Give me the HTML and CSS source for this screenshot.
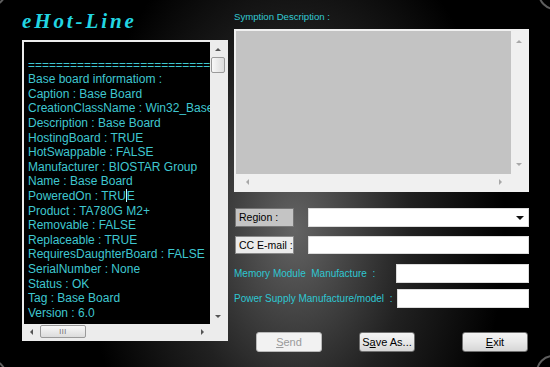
FILE: index.html
```html
<!DOCTYPE html>
<html lang="en">
<head>
  <meta charset="UTF-8">
  <meta name="viewport" content="width=device-width, initial-scale=1.0">
  <title>eHot-Line</title>
  <link rel="stylesheet" href="styles.css">
</head>
<body>

  <div class="window">
    <div class="ring ring-tl"></div>
    <div class="ring ring-tr"></div>
    <div class="ring ring-bl"></div>
    <div class="ring ring-br"></div>

    <div class="left">
      <h1 class="title">eHot-Line</h1>

      <div class="log">
        <div class="log-text">
          <div class="line">&nbsp;</div>
          <div class="line">========================================</div>
          <div class="line">Base board informatiom :</div>
          <div class="line">Caption : Base Board</div>
          <div class="line">CreationClassName : Win32_BaseBoard</div>
          <div class="line">Description : Base Board</div>
          <div class="line">HostingBoard : TRUE</div>
          <div class="line">HotSwappable : FALSE</div>
          <div class="line">Manufacturer : BIOSTAR Group</div>
          <div class="line">Name : Base Board</div>
          <div class="line">PoweredOn : TRU<span class="caret"></span>E</div>
          <div class="line">Product : TA780G M2+</div>
          <div class="line">Removable : FALSE</div>
          <div class="line">Replaceable : TRUE</div>
          <div class="line">RequiresDaughterBoard : FALSE</div>
          <div class="line">SerialNumber : None</div>
          <div class="line">Status : OK</div>
          <div class="line">Tag : Base Board</div>
          <div class="line">Version : 6.0</div>
        </div>
        <div class="vscroll">
          <div class="arrow-box"><span class="arr arr-up"></span></div>
          <div class="vthumb"></div>
          <div class="spacer"></div>
          <div class="arrow-box"><span class="arr arr-down"></span></div>
        </div>
        <div class="hscroll">
          <div class="arrow-box"><span class="arr arr-left"></span></div>
          <div class="hthumb">III</div>
          <div class="spacer"></div>
          <div class="arrow-box"><span class="arr arr-right"></span></div>
        </div>
        <div class="scroll-corner"></div>
      </div>
    </div>

    <div class="right">
      <div class="caption">Symption Description :</div>

      <div class="memo">
        <div class="memo-area"></div>
        <div class="vscroll light">
          <div class="arrow-box"><span class="arr arr-up"></span></div>
          <div class="spacer"></div>
          <div class="arrow-box"><span class="arr arr-down"></span></div>
        </div>
        <div class="hscroll light">
          <div class="arrow-box"><span class="arr arr-left"></span></div>
          <div class="spacer"></div>
          <div class="arrow-box"><span class="arr arr-right"></span></div>
        </div>
        <div class="scroll-corner"></div>
      </div>

      <div class="row row-region">
        <div class="tag tag-dark">Region :</div>
        <div class="field select"><span class="drop"></span></div>
      </div>

      <div class="row row-cc">
        <div class="tag">CC E-mail :</div>
        <div class="field"></div>
      </div>

      <div class="row row-memory">
        <div class="caption big">Memory Module&nbsp; Manufacture&nbsp; :</div>
        <div class="field field-memory"></div>
      </div>

      <div class="row row-power">
        <div class="caption big">Power Supply Manufacture/model&nbsp; :</div>
        <div class="field field-power"></div>
      </div>

      <div class="buttons">
        <button class="btn btn-send" disabled><u>S</u>end</button>
        <button class="btn btn-save">S<u>a</u>ve As...</button>
        <button class="btn btn-exit"><u>E</u>xit</button>
      </div>
    </div>
  </div>

</body>
</html>
```

FILE: styles.css
```css
body {
  margin: 0;
  font-family: "Liberation Sans", Arial, sans-serif;
}

.window {
  position: relative;
  width: 550px;
  height: 367px;
  overflow: hidden;
  display: flex;
  padding-left: 22px;
  box-sizing: border-box;
  background:
    radial-gradient(ellipse 210px 320px at 295px 230px, rgba(105,105,105,0.95), rgba(55,55,55,0.6) 55%, rgba(0,0,0,0) 100%),
    #000;
}

/* grey arcs in the corners */
.ring {
  position: absolute;
  width: 30px;
  height: 30px;
  border: 2px solid #5e5e5e;
  border-radius: 50%;
}

.ring-tl { left: -27px; top: -27px; }
.ring-tr { right: -22px; top: -24px; }
.ring-bl { left: -27px; bottom: -26px; }
.ring-br { right: -20px; bottom: -22px; }

.left {
  width: 206px;
}

.title {
  margin: 0;
  height: 31px;
  padding-top: 9px;
  font-family: "Liberation Serif", "Times New Roman", serif;
  font-style: italic;
  font-weight: bold;
  font-size: 21px;
  line-height: 24px;
  letter-spacing: 2.9px;
  color: #22d6e2;
}

.log {
  width: 206px;
  height: 301px;
  box-sizing: border-box;
  border: 2px solid #ececec;
  display: grid;
  grid-template-columns: 186px 16px;
  grid-template-rows: 282px 15px;
  background-color: #f0f0f0;
}

.log-text {
  background-color: #000;
  overflow: hidden;
  padding: 1px 0 0 4px;
  font-size: 12px;
  line-height: 14.6px;
  color: #3fc7d0;
}

.line {
  white-space: pre;
}

.caret {
  display: inline-block;
  width: 0;
  height: 13px;
  border-left: 1px solid #bff;
  vertical-align: -2px;
}

.vscroll {
  display: flex;
  flex-direction: column;
  align-items: center;
  background-color: #ececec;
}

.hscroll {
  display: flex;
  align-items: center;
  background-color: #ececec;
}

.scroll-corner {
  background-color: #ececec;
}

.spacer {
  flex: 1;
}

.arrow-box {
  width: 15px;
  height: 15px;
  display: flex;
  align-items: center;
  justify-content: center;
}

.arr {
  width: 0;
  height: 0;
}

.arr-up {
  border-left: 3px solid transparent;
  border-right: 3px solid transparent;
  border-bottom: 3px solid #555;
}

.arr-down {
  border-left: 3px solid transparent;
  border-right: 3px solid transparent;
  border-top: 3px solid #555;
}

.arr-left {
  border-top: 3px solid transparent;
  border-bottom: 3px solid transparent;
  border-right: 3px solid #555;
}

.arr-right {
  border-top: 3px solid transparent;
  border-bottom: 3px solid transparent;
  border-left: 3px solid #555;
}

.light .arr-up { border-bottom-color: #a8a8a8; }
.light .arr-down { border-top-color: #a8a8a8; }
.light .arr-left { border-right-color: #a8a8a8; }
.light .arr-right { border-left-color: #a8a8a8; }

.vthumb {
  width: 12px;
  height: 14px;
  border: 1px solid #9a9a9a;
  border-radius: 2px;
  background: linear-gradient(to right, #f8f8f8, #dcdcdc);
}

.hthumb {
  width: 44px;
  height: 11px;
  margin-left: 1px;
  border: 1px solid #9a9a9a;
  border-radius: 2px;
  background: linear-gradient(#f8f8f8, #dcdcdc);
  font-size: 7px;
  line-height: 11px;
  text-align: center;
  color: #666;
  letter-spacing: 0.5px;
}

.right {
  width: 295px;
  margin-left: 6px;
}

.caption {
  padding-top: 11px;
  height: 12px;
  font-size: 9.6px;
  line-height: 12px;
  color: #33c9d3;
  white-space: nowrap;
}

.caption.big {
  padding-top: 0;
  font-size: 10px;
  color: #2ec7d2;
}

.memo {
  margin-top: 6px;
  height: 163px;
  box-sizing: border-box;
  border: 2px solid #f0f0f0;
  display: grid;
  grid-template-columns: 275px 16px;
  grid-template-rows: 143px 16px;
}

.memo-area {
  background-color: #c3c3c3;
}

.memo .vscroll,
.memo .hscroll,
.memo .scroll-corner {
  background-color: #f0f0f0;
}

.memo .vscroll .arrow-box {
  height: 20px;
}

.memo .hscroll .arrow-box {
  width: 22px;
}

.row {
  display: flex;
  align-items: center;
}

.row-region {
  margin-top: 16px;
  height: 19px;
}

.row-cc {
  margin-top: 9px;
  height: 18px;
}

.row-memory {
  margin-top: 10px;
  height: 19px;
}

.row-power {
  margin-top: 6px;
  height: 19px;
}

.tag {
  width: 59px;
  height: 100%;
  margin-left: 1px;
  box-sizing: border-box;
  border: 1px solid #8a8a8a;
  background-color: #ebebeb;
  padding-left: 3px;
  font-size: 10.5px;
  line-height: 16px;
  color: #000;
  white-space: nowrap;
  overflow: hidden;
}

.tag-dark {
  background-color: #c4c4c4;
  border-color: #767676;
}

.field {
  margin-left: auto;
  width: 221px;
  height: 100%;
  box-sizing: border-box;
  border: 1px solid #dcdcdc;
  background-color: #fff;
}

.field-memory {
  width: 133px;
}

.field-power {
  width: 132px;
}

.select {
  position: relative;
}

.drop {
  position: absolute;
  right: 4px;
  top: 7px;
  border-left: 4px solid transparent;
  border-right: 4px solid transparent;
  border-top: 4px solid #111;
}

.buttons {
  display: flex;
  margin-top: 24px;
  height: 20px;
}

.btn {
  height: 20px;
  padding: 0;
  box-sizing: border-box;
  border: 1px solid #707070;
  border-radius: 3px;
  background: linear-gradient(#f4f4f4, #e8e8e8 50%, #d6d6d6);
  font-family: "Liberation Sans", Arial, sans-serif;
  font-size: 11px;
  color: #000;
}

.btn-send {
  margin-left: 22px;
  width: 66px;
  border-color: #b8b8b8;
  background: #f2f2f2;
  color: #9a9a9a;
}

.btn-save {
  margin-left: 37px;
  width: 56px;
}

.btn-exit {
  margin-left: 47px;
  width: 66px;
}
```
